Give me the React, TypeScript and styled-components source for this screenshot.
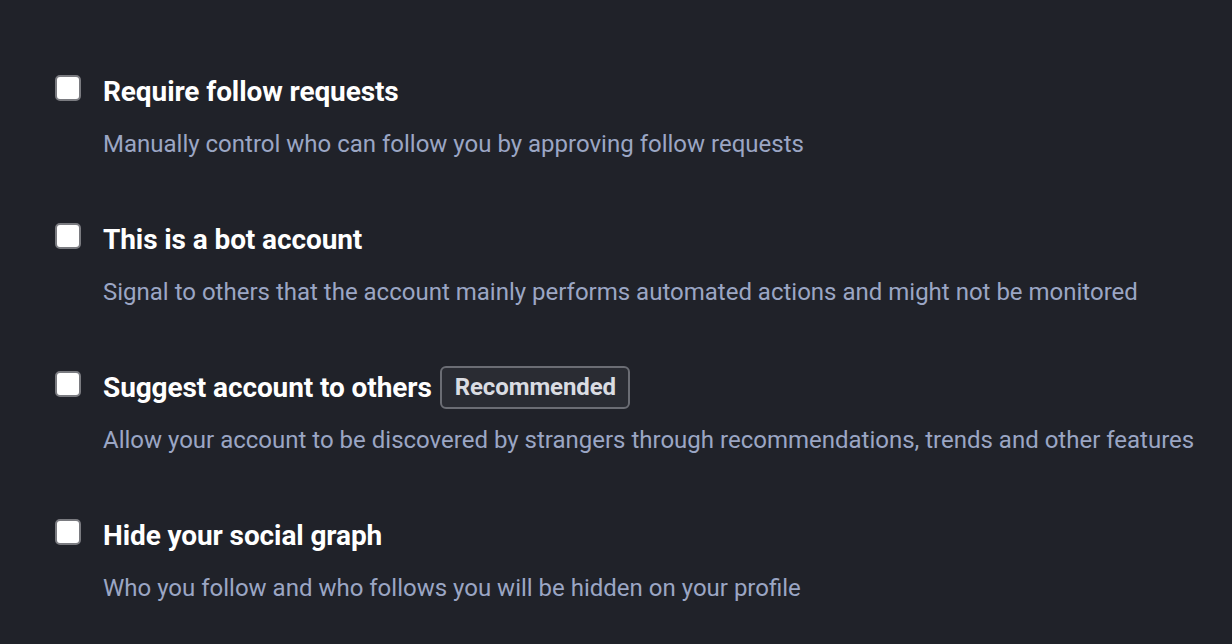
import React from "react";
import styled, { createGlobalStyle } from "styled-components";

const Global = createGlobalStyle`
  html, body { margin: 0; padding: 0; background: #202229; }
  body { font-family: Roboto, "Liberation Sans", sans-serif; }
`;

const Page = styled.div`
  width: 1232px;
  height: 644px;
  box-sizing: border-box;
  padding: 74px 0 0 55px;
  display: flex;
  flex-direction: column;
  gap: 44px;
  background: #202229;
`;

const Row = styled.label`
  display: flex;
  align-items: flex-start;
  gap: 22px;
  height: 104px;
`;

const Box = styled.span`
  flex: none;
  width: 22px;
  height: 22px;
  margin-top: 1px;
  background: #ffffff;
  border: 2px solid #7a7b80;
  border-radius: 5px;
`;

const Texts = styled.div`
  display: flex;
  flex-direction: column;
  gap: 20px;
`;

const TitleLine = styled.div`
  display: flex;
  align-items: center;
  gap: 8px;
  height: 34px;
  color: #ffffff;
  font-size: 28px;
  font-weight: 700;
  letter-spacing: -0.1px;
`;

const Badge = styled.span`
  display: inline-flex;
  align-items: center;
  box-sizing: border-box;
  height: 43px;
  padding: 0 12px 0 13px;
  border: 2px solid #6b6d74;
  border-radius: 6px;
  background: #2a2c33;
  color: #dadce2;
  font-size: 24px;
  font-weight: 700;
  letter-spacing: -0.1px;
`;

const Hint = styled.div`
  color: #9ba6c4;
  font-size: 24px;
  line-height: 32px;
`;

const items = [
  {
    title: "Require follow requests",
    hint: "Manually control who can follow you by approving follow requests",
  },
  {
    title: "This is a bot account",
    hint: "Signal to others that the account mainly performs automated actions and might not be monitored",
  },
  {
    title: "Suggest account to others",
    badge: "Recommended",
    hint: "Allow your account to be discovered by strangers through recommendations, trends and other features",
  },
  {
    title: "Hide your social graph",
    hint: "Who you follow and who follows you will be hidden on your profile",
  },
];

export default function App() {
  return (
    <>
      <Global />
      <Page>
        {items.map((it) => (
          <Row key={it.title}>
            <Box />
            <Texts>
              <TitleLine>
                {it.title}
                {it.badge && <Badge>{it.badge}</Badge>}
              </TitleLine>
              <Hint>{it.hint}</Hint>
            </Texts>
          </Row>
        ))}
      </Page>
    </>
  );
}
